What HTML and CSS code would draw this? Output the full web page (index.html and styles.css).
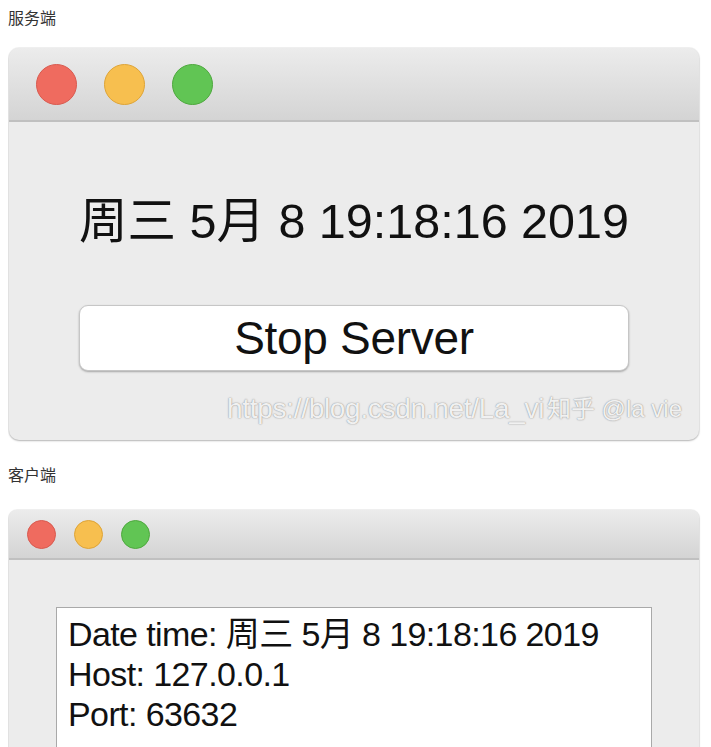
FILE: index.html
```html
<!DOCTYPE html>
<html lang="zh-CN">
<head>
  <meta charset="UTF-8">
  <meta name="viewport" content="width=device-width, initial-scale=1.0">
  <title>服务端 / 客户端</title>
  <link rel="stylesheet" href="styles.css">
</head>
<body>
  <div class="caption">服务端</div>
  <div class="window server">
    <div class="titlebar">
      <span class="light red"></span>
      <span class="light yellow"></span>
      <span class="light green"></span>
    </div>
    <div class="content">
      <div class="clock">周三 5月 8 19:18:16 2019</div>
      <div class="stop-button">Stop Server</div>
    </div>
    <div class="watermark">
      <span class="wm-url">https://blog.csdn.net/La_vi</span>
      <span class="wm-zhihu">知乎 @la vie</span>
    </div>
  </div>

  <div class="caption caption-client">客户端</div>
  <div class="window client">
    <div class="titlebar">
      <span class="light red"></span>
      <span class="light yellow"></span>
      <span class="light green"></span>
    </div>
    <div class="content">
      <div class="info-box">
        <div>Date time: 周三 5月 8 19:18:16 2019</div>
        <div>Host: 127.0.0.1</div>
        <div>Port: 63632</div>
      </div>
    </div>
  </div>
</body>
</html>
```
FILE: styles.css
```css
body {
  margin: 8px;
  background: #fff;
  font-family: "Liberation Sans", "Noto Sans CJK SC", Arial, sans-serif;
  color: #111;
  overflow: hidden;
}
.caption {
  font-family: "Noto Sans CJK SC", sans-serif;
  font-size: 16px;
  line-height: 18px;
  height: 20px;
  color: #333;
}
.caption-client {
  margin-top: 25px;
}
.window {
  position: relative;
  width: 690px;
  margin-left: 1px;
  background: #ececec;
  border-radius: 10px;
  box-shadow: 0 0 0 1px rgba(0,0,0,0.05), 0 1px 2px rgba(0,0,0,0.25);
  overflow: hidden;
}
.server {
  margin-top: 20px;
  height: 392px;
}
.client {
  margin-top: 25px;
  height: 260px;
  border-radius: 8px 8px 0 0;
}
.titlebar {
  display: flex;
  align-items: center;
  background: linear-gradient(#ececec, #d4d4d4);
  border-bottom: 2px solid #c0c0c0;
}
.server .titlebar {
  height: 72px;
  padding-left: 27px;
  gap: 27px;
}
.client .titlebar {
  height: 48px;
  padding-left: 18px;
  gap: 18px;
}
.light {
  display: block;
  border-radius: 50%;
  box-sizing: border-box;
  border-style: solid;
}
.server .light {
  width: 41px;
  height: 41px;
  border-width: 1.5px;
}
.client .light {
  width: 29px;
  height: 29px;
  border-width: 1px;
}
.red {
  background: #ef6b5f;
  border-color: #d85a4f;
}
.yellow {
  background: #f7bf4f;
  border-color: #dea437;
}
.green {
  background: #61c554;
  border-color: #4ea83e;
}
.server .content {
  display: flex;
  flex-direction: column;
  align-items: center;
  padding-top: 71px;
}
.clock {
  font-size: 48.5px;
  line-height: 56px;
  height: 56px;
}
.stop-button {
  margin-top: 56px;
  width: 550px;
  height: 66px;
  box-sizing: border-box;
  background: #fff;
  border: 1px solid #c6c6c6;
  border-radius: 9px;
  box-shadow: 0 1px 2px rgba(0,0,0,0.3);
  font-size: 46px;
  line-height: 64px;
  text-align: center;
  letter-spacing: -0.3px;
}
.watermark {
  position: absolute;
  right: 17px;
  bottom: 14px;
  height: 34px;
  width: 455px;
  color: rgba(255,255,255,0.9);
  text-shadow: 0 0 1px #8a8a8a, 0 0 2px #b5b5b5;
}
.wm-url {
  position: absolute;
  left: 0;
  bottom: 0;
  font-size: 28px;
  letter-spacing: -0.3px;
  line-height: 34px;
}
.wm-zhihu {
  position: absolute;
  right: 0;
  bottom: 2px;
  font-size: 24px;
  line-height: 30px;
}
.client .content {
  padding: 47px 47px 0 47px;
}
.info-box {
  background: #fff;
  border: 1px solid #a9a9a9;
  border-bottom: none;
  height: 200px;
  padding: 6px 11px 0;
  font-size: 34px;
  line-height: 40px;
  letter-spacing: -0.6px;
}
```
